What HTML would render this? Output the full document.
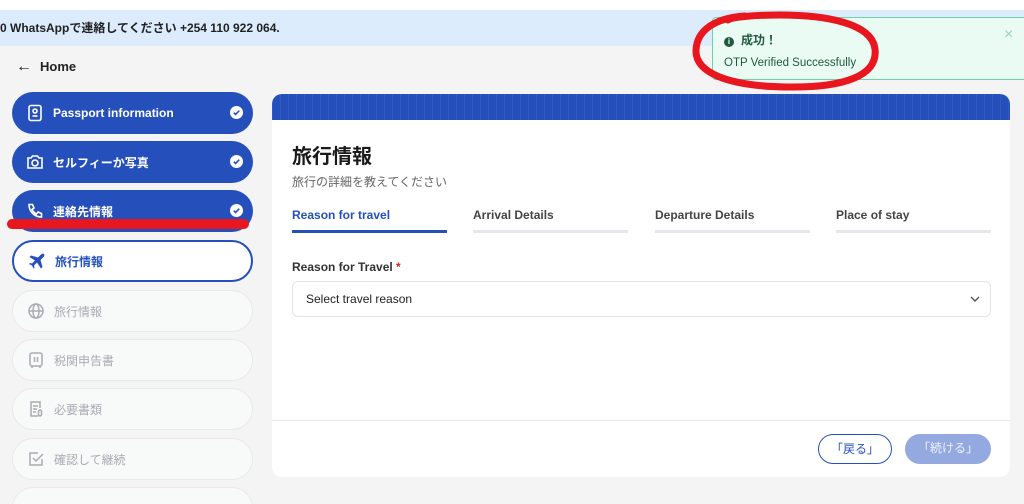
<!DOCTYPE html>
<html><head><meta charset="utf-8"><style>
*{box-sizing:border-box;margin:0;padding:0}
html,body{width:1024px;height:504px;overflow:hidden}
body{background:#f4f4f4;font-family:"Liberation Sans","Noto Sans CJK JP",sans-serif;position:relative;color:#1a1a1a}
.top{position:absolute;left:0;top:0;width:1024px;height:10px;background:#fff}
.banner{position:absolute;left:0;top:10px;width:1024px;height:36px;background:#dcecfc;font-size:12px;font-weight:bold;line-height:36px;color:#222}
.home{position:absolute;left:16px;top:58px;font-size:13px;font-weight:bold;color:#222}
.item{position:absolute;left:12px;width:241px;height:42px;border-radius:21px;display:flex;align-items:center;padding-left:14px;font-size:12px;font-weight:bold}
.done{background:#2550bc;color:#fff}
.act{background:#fff;border:2px solid #2550bc;color:#2550bc}
.dis{background:#f8f9f9;border:1px solid #e8e9eb;color:#a8acb3;font-weight:normal}
.item svg{width:18px;height:18px;margin-right:9px;flex:none}
.item svg.chk{position:absolute;right:10px;top:14px;width:13px;height:13px;margin:0}
.card{position:absolute;left:272px;top:94px;width:738px;height:383px;background:#fff;border-radius:10px;overflow:hidden}
.hdr{height:26px;background:#2550bc;background-image:repeating-linear-gradient(90deg,rgba(255,255,255,.06) 0 1px,transparent 1px 8px)}
.tab{position:absolute;top:114px;font-size:12px;font-weight:bold;color:#444}
.bar{position:absolute;top:136px;height:3px;width:155px;background:#e6e7ea}
.btn{position:absolute;top:340px;height:30px;border-radius:15px;font-size:12px;text-align:center;line-height:28px}
</style></head><body>
<div class="top"></div>
<div class="banner">0 WhatsAppで連絡してください +254 110 922 064.</div>
<div class="home"><span style="font-weight:normal;font-size:16px;margin-right:8px">←</span>Home</div>

<div class="item done" style="top:92px"><svg viewBox="0 0 18 18" fill="none" stroke="#fff" stroke-width="1.6"><rect x="3" y="1.5" width="12" height="15" rx="2"/><circle cx="9" cy="7" r="2"/><path d="M6.5 12h5"/></svg>Passport information<svg class="chk" viewBox="0 0 13 13"><circle cx="6.5" cy="6.5" r="6.5" fill="#fff"/><path d="M3.8 6.7l1.8 1.8 3.6-3.8" fill="none" stroke="#2550bc" stroke-width="1.6"/></svg></div>
<div class="item done" style="top:141px"><svg viewBox="0 0 18 18" fill="none" stroke="#fff" stroke-width="1.6"><path d="M2 5h3l1.5-2h5L13 5h3v10H2z"/><circle cx="9" cy="10" r="3"/></svg>セルフィーか写真<svg class="chk" viewBox="0 0 13 13"><circle cx="6.5" cy="6.5" r="6.5" fill="#fff"/><path d="M3.8 6.7l1.8 1.8 3.6-3.8" fill="none" stroke="#2550bc" stroke-width="1.6"/></svg></div>
<div class="item done" style="top:190px"><svg viewBox="0 0 18 18" fill="none" stroke="#fff" stroke-width="1.6"><path d="M3 2.5h3.5l1.5 3.5-2 1.5c1 2 2.5 3.5 4.5 4.5l1.5-2 3.5 1.5v3.5c-7 0-12.5-5.5-12.5-12.5z"/></svg>連絡先情報<svg class="chk" viewBox="0 0 13 13"><circle cx="6.5" cy="6.5" r="6.5" fill="#fff"/><path d="M3.8 6.7l1.8 1.8 3.6-3.8" fill="none" stroke="#2550bc" stroke-width="1.6"/></svg></div>
<div style="position:absolute;left:7px;top:219px;width:242px;height:10px;background:#e8161e;border-radius:5px"></div>
<div class="item act" style="top:240px"><svg viewBox="0 0 18 18" fill="#2550bc"><path d="M16 2c-1-1-2.5 0-3.5 1L10 5.5 3 3.5 1.5 5l5.5 3.5-3 3-2-.5-1 1 3 1.5 1.5 3 1-1-.5-2 3-3L13 16.5l1.5-1.5-2-7L15 5.5c1-1 2-2.5 1-3.5z"/></svg>旅行情報</div>
<div class="item dis" style="top:290px"><svg viewBox="0 0 18 18" fill="none" stroke="#a8acb3" stroke-width="1.5"><circle cx="9" cy="9" r="7"/><ellipse cx="9" cy="9" rx="3" ry="7"/><path d="M2 9h14"/></svg>旅行情報</div>
<div class="item dis" style="top:339px"><svg viewBox="0 0 18 18" fill="none" stroke="#a8acb3" stroke-width="1.5"><rect x="3" y="2" width="12" height="13" rx="2"/><path d="M7.5 6v5M10.5 6v5M5 15v2M13 15v2"/></svg>税関申告書</div>
<div class="item dis" style="top:388px"><svg viewBox="0 0 18 18" fill="none" stroke="#a8acb3" stroke-width="1.5"><path d="M11 16H4V2h9v6"/><path d="M6 6h5M6 9h4M6 12h3"/><rect x="11.5" y="10" width="3" height="6" rx="1.5"/></svg>必要書類</div>
<div class="item dis" style="top:438px"><svg viewBox="0 0 18 18" fill="none" stroke="#a8acb3" stroke-width="1.5"><path d="M15 9v6H3V3h8"/><path d="M6 8l3 3 7-7"/></svg>確認して継続</div>
<div class="item dis" style="top:487px"></div>

<div class="card">
<div class="hdr"></div>
<div style="position:absolute;left:20px;top:46px;font-size:20px;font-weight:bold">旅行情報</div>
<div style="position:absolute;left:20px;top:79px;font-size:12px;color:#666">旅行の詳細を教えてください</div>
<div class="tab" style="left:20px;color:#2550bc">Reason for travel</div>
<div class="tab" style="left:201px">Arrival Details</div>
<div class="tab" style="left:383px">Departure Details</div>
<div class="tab" style="left:564px">Place of stay</div>
<div class="bar" style="left:20px;background:#2550bc"></div>
<div class="bar" style="left:201px"></div>
<div class="bar" style="left:383px"></div>
<div class="bar" style="left:564px"></div>
<div style="position:absolute;left:20px;top:166px;font-size:12px;font-weight:bold;color:#333">Reason for Travel <span style="color:#e02020">*</span></div>
<div style="position:absolute;left:20px;top:187px;width:699px;height:36px;border:1px solid #e2e4e8;border-radius:6px;font-size:12px;line-height:34px;padding-left:13px;color:#222">Select travel reason<svg style="position:absolute;right:10px;top:13px" width="10" height="8" viewBox="0 0 10 8"><path d="M1 2l4 4 4-4" fill="none" stroke="#555" stroke-width="1.4"/></svg></div>
<div style="position:absolute;left:0;top:326px;width:738px;height:1px;background:#e8e9ec"></div>
<div class="btn" style="left:546px;width:74px;border:1.5px solid #2550bc;color:#2550bc">「戻る」</div>
<div class="btn" style="left:633px;width:86px;background:#93a9df;color:#eef2fb">「続ける」</div>
</div>

<div style="position:absolute;left:712px;top:17px;width:320px;height:63px;background:#eafbf3;border:1px solid #6dd4a8;border-radius:4px">
<div style="position:absolute;left:11px;top:13px;font-size:12px;font-weight:bold;color:#1f5a3e"><span style="display:inline-block;width:10px;height:10px;border-radius:50%;background:#1f5a3e;color:#fff;font-size:8px;text-align:center;line-height:10px;margin-right:7px;vertical-align:0">i</span>成功！</div>
<div style="position:absolute;left:11px;top:39px;font-size:11.5px;color:#1f5a3e">OTP Verified Successfully</div>
<div style="position:absolute;left:291px;top:8px;font-size:16px;color:#9ccfb8">×</div>
</div>
<svg style="position:absolute;left:0;top:0" width="1024" height="504"><path d="M745 16C715 18 697 30 696 50c-1 22 30 36 90 37 60 1 92-12 89-38-3-26-50-34-95-34-25 0-48 2-52 5" fill="none" stroke="#e8161e" stroke-width="7" stroke-linecap="round"/></svg>
</body></html>
